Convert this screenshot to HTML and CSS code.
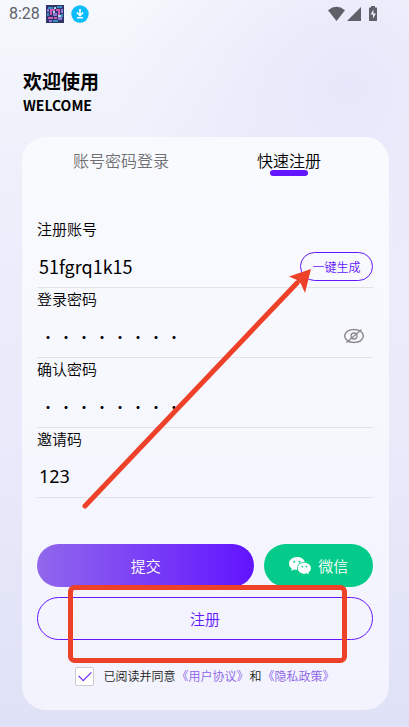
FILE: index.html
```html
<!DOCTYPE html>
<html lang="zh-CN">
<head>
<meta charset="utf-8">
<meta name="viewport" content="width=device-width, initial-scale=1">
<title>快速注册</title>
<link rel="stylesheet" href="styles.css">
</head>
<body>
<div class="screen">
  <header class="status">
    <span class="clock">8:28</span>
    <svg class="app-icon" viewBox="0 0 18 18" aria-hidden="true">
      <rect width="18" height="18" fill="#30356a"/>
      <path d="M2 2h5v2H2zM11 1h5v2h-5zM1 8h2v3H1zM7 15h5v2H7zM15 9h2v3h-2z" fill="#3d8fc0"/>
      <path d="M4 4h5v2H6v4H4zM10 4h4v6h-2V6h-2zM2 12h5v2H2zM8 12h3v2H8z" fill="#d158b4"/>
      <path d="M7 8h4v3H7zM12 12h4v3h-4zM15 4h2v4h-2zM1 4h2v3H1zM3 15h3v2H3z" fill="#8f79d8"/>
      <path d="M12 10h3v2h-3zM8 2h2v2H8zM7 6h2v2H7z" fill="#a9dbe4"/>
    </svg>
    <svg class="download-icon" viewBox="0 0 18 18" aria-hidden="true">
      <circle cx="9" cy="9" r="8.7" fill="#0bbcfb"/>
      <path d="M9 4v6M6 7.500l3 3 3-3M6 12.800h6" fill="none" stroke="#fff" stroke-width="1.600"/>
    </svg>
    <svg class="signals" viewBox="0 0 52 16" aria-hidden="true">
      <g fill="#5f5f68">
        <path d="M0 4.200Q8.500-2.500 17 4.200L8.500 15z"/>
        <path d="M33 1v14H19z"/>
        <path d="M43 0h4v1.500h1.500q.5 0 .5.500v12.500q0 .5-.5.500h-7q-.5 0-.5-.5V2q0-.5.500-.5H43z"/>
      </g>
      <path d="M45.500 3.500v4H48l-3 5v-4h-2.500z" fill="#eef"/>
    </svg>
  </header>
  <div class="welcome">
    <h1>欢迎使用</h1>
    <p>WELCOME</p>
  </div>
  <main class="card">
    <nav class="tabs">
      <button type="button" class="tab">账号密码登录</button>
      <button type="button" class="tab active">快速注册</button>
    </nav>
    <form class="form">
      <div class="field">
        <label for="account">注册账号</label>
        <div class="control">
          <input id="account" type="text" value="51fgrq1k15">
          <button type="button" class="generate">一键生成</button>
        </div>
      </div>
      <div class="field">
        <label for="password">登录密码</label>
        <div class="control">
          <input id="password" type="password" value="abcd1234">
          <button type="button" class="reveal" aria-label="显示密码">
            <svg viewBox="0 0 22 16" aria-hidden="true"><g fill="none" stroke="#8b8b8f" stroke-width="1.300"><path d="M1.500 8Q3 1.500 11 1.500T20.500 8Q19 14.500 11 14.500T1.500 8z"/><circle cx="11" cy="8" r="3"/><path d="M3.500 14.500L18.500 1.500"/></g></svg>
          </button>
        </div>
      </div>
      <div class="field">
        <label for="confirm">确认密码</label>
        <div class="control"><input id="confirm" type="password" value="abcd1234"></div>
      </div>
      <div class="field">
        <label for="invite">邀请码</label>
        <div class="control"><input id="invite" class="code" type="text" value="123"></div>
      </div>
      <div class="actions">
        <button type="button" class="submit">提交</button>
        <button type="button" class="wechat">
          <svg viewBox="0 0 22 18" aria-hidden="true">
            <path d="M8 0C3.500 0 0 3 0 6.600c0 2.100 1.100 3.900 2.900 5.100L2.200 14l2.700-1.400c1 .3 2 .5 3.200.5C7.500 8.500 10.500 5 15.800 5 15 2 11.800 0 8 0z" fill="#fff"/>
            <path d="M15.300 5.800c-3.700 0-6.500 2.400-6.500 5.400s2.800 5.500 6.500 5.500c.9 0 1.700-.1 2.400-.4l2.200 1.300-.6-2c1.600-1 2.600-2.600 2.600-4.400 0-3-2.900-5.400-6.600-5.400z" fill="#fff"/>
            <g fill="#04cb89"><circle cx="5.300" cy="4.700" r="1"/><circle cx="10.500" cy="4.700" r="1"/><circle cx="13.200" cy="9.600" r=".9"/><circle cx="17.500" cy="9.600" r=".9"/></g>
          </svg>
          <span>微信</span>
        </button>
        <button type="button" class="register">注册</button>
      </div>
      <div class="agreement">
        <input id="agree" type="checkbox" checked>
        <label for="agree">已阅读并同意</label>
        <a href="#terms">《用户协议》</a>
        <span>和</span>
        <a href="#privacy">《隐私政策》</a>
      </div>
    </form>
    <svg class="annotation" viewBox="0 0 367 573" aria-hidden="true">
      <path d="M63 369L275 146" stroke="#ee4129" stroke-width="5" stroke-linecap="round"/>
      <path d="M289 132l-22 7.500 8 3.500 4 4 4 9z" fill="#ee4129"/>
      <rect x="48.500" y="450.500" width="274" height="73" rx="4" fill="none" stroke="#ee4129" stroke-width="5"/>
    </svg>
  </main>
</div>
</body>
</html>
```
FILE: styles.css
```css
* { box-sizing: border-box; }

body {
  margin: 0;
  font-family: "Noto Sans CJK SC", sans-serif;
  font-size: 15px;
  font-weight: 350;
  color: #000;
}

button, input {
  margin: 0;
  padding: 0;
  border: 0;
  background: none;
  font: inherit;
  color: inherit;
}

a { color: #8c60e8; text-decoration: none; }

h1, p { margin: 0; }

.screen {
  min-height: 100vh;
  padding-bottom: 17px;
  background:
    radial-gradient(circle at 85% 12%, #e6e7fa 0, rgba(230, 231, 250, 0) 230px),
    linear-gradient(180deg, #f5f8fc 0, #eeeffb 25%, #e9eafa 60%, #dfe1f6 100%);
}

.status {
  display: flex;
  align-items: center;
  height: 28px;
  padding: 0 29px 0 9px;
}

.clock {
  font: 400 16px/28px Roboto, sans-serif;
  color: #606168;
}

.app-icon { width: 18px; height: 18px; margin-left: 6px; }
.download-icon { width: 18px; height: 18px; margin-left: 7px; }
.signals { width: 52px; height: 16px; margin-left: auto; }

.welcome { padding: 40px 23px 0; color: #000; }
.welcome h1 { font-size: 19px; line-height: 26px; font-weight: 700; }
.welcome p { font-size: 14px; line-height: 22px; font-weight: 700; }

.card {
  position: relative;
  margin: 21px 20px 0 22px;
  padding: 8px 16px 24px 15px;
  border-radius: 24px;
  background: linear-gradient(180deg, #f9fafe 0, #f7f8fd 45%, #f4f5fe 70%, #f2f3fc 100%);
}

.tabs { display: grid; grid-template-columns: 1fr 1fr; }

.tab {
  display: flex;
  flex-direction: column;
  align-items: center;
  height: 32px;
  font-size: 16px;
  line-height: 30px;
  color: #707074;
}

.tab.active { color: #000; }

.tab.active::after {
  content: "";
  flex: none;
  width: 38px;
  height: 6px;
  margin-top: -5px;
  border-radius: 3px;
  background: #6417ff;
}

.form { padding-top: 41px; }

.field {
  height: 70px;
  border-bottom: 1px solid #e2e2e9;
}

.field label { display: block; line-height: 22px; }

.control {
  display: flex;
  align-items: center;
  height: 42px;
  margin-top: 5px;
}

.control input {
  flex: 1;
  min-width: 0;
  height: 28px;
  padding-left: 2px;
  font-size: 18px;
  font-weight: 400;
  outline: none;
}

.control input[type="password"] { font-weight: 100; }
.control .code { font-family: "Noto Sans", sans-serif; font-weight: normal; }

.generate {
  width: 73px;
  height: 29px;
  border: 1px solid #6417ff;
  border-radius: 15px;
  font-size: 12px;
  color: #6417ff;
}

.reveal { height: 16px; margin-right: 8px; }
.reveal svg { display: block; width: 22px; height: 16px; }

.actions {
  display: grid;
  grid-template-columns: 2fr 1fr;
  gap: 10px;
  padding-top: 46px;
}

.actions button { height: 43px; border-radius: 22px; }

.submit { background: linear-gradient(90deg, #9168ec, #6114ff); }
.actions .submit, .actions .wechat { color: #fff; }

.wechat {
  display: flex;
  align-items: center;
  justify-content: center;
  gap: 7px;
  background: #04cb89;
}

.wechat svg { width: 22px; height: 18px; }

.actions .register {
  grid-column: 1 / -1;
  border: 1px solid #6417ff;
  color: #6417ff;
}

.agreement {
  display: flex;
  align-items: center;
  justify-content: center;
  gap: 1px;
  padding-top: 26px;
  font-size: 12px;
  line-height: 20px;
  color: #222;
}

.agreement input {
  appearance: none;
  width: 19px;
  height: 19px;
  margin-right: 8px;
  border: 1px solid #ccccd0;
  border-radius: 2px;
  background: #fff;
  display: grid;
  place-items: center;
}

.agreement input:checked::after {
  content: "";
  width: 11px;
  height: 6px;
  margin-bottom: 3px;
  border: solid #6417ff;
  border-width: 0 0 1px 1px;
  transform: rotate(-45deg);
}

.annotation {
  position: absolute;
  inset: 0;
  width: 100%;
  height: 100%;
  pointer-events: none;
}
```
